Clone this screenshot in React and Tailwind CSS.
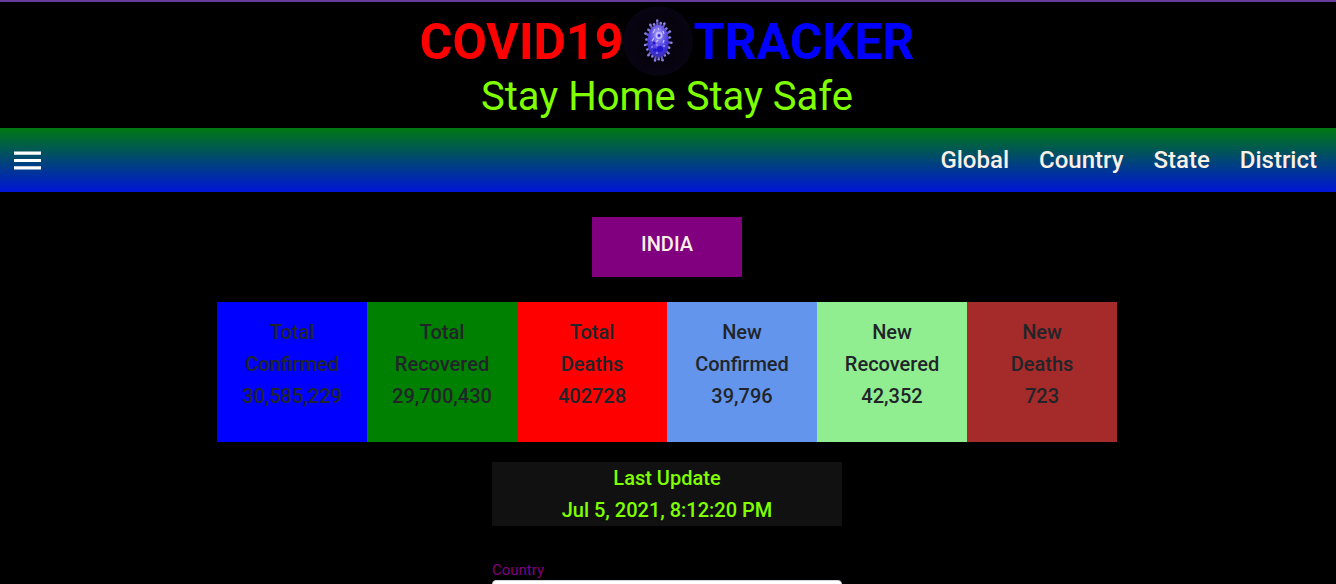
import React from "react";

const links = ["Global", "Country", "State", "District"];

const stats = [
  { kind: "Total", name: "Confirmed", value: "30,585,229", color: "bg-[#0000ff]" },
  { kind: "Total", name: "Recovered", value: "29,700,430", color: "bg-[#008000]" },
  { kind: "Total", name: "Deaths", value: "402728", color: "bg-[#ff0000]" },
  { kind: "New", name: "Confirmed", value: "39,796", color: "bg-[#6495ed]" },
  { kind: "New", name: "Recovered", value: "42,352", color: "bg-[#90ee90]" },
  { kind: "New", name: "Deaths", value: "723", color: "bg-[#a52a2a]" },
];

function VirusLogo() {
  const spikes = Array.from({ length: 22 }, (_, i) => {
    const a = ((i + 0.3) * 2 * Math.PI) / 22;
    const reach = [1, 0.9, 0.98, 0.87][i % 4];
    const c = Math.cos(a);
    const s = Math.sin(a);
    return {
      x1: 35 + 8 * c,
      y1: 35 + 13 * s,
      x2: 35 + 13.5 * reach * c,
      y2: 35 + 20.5 * reach * s,
    };
  });
  return (
    <svg viewBox="0 0 70 70" className="size-[70px] shrink-0" role="img" aria-label="Virus">
      <defs>
        <radialGradient id="virusBody" cx="0.5" cy="0.3" r="0.72">
          <stop offset="0" stopColor="#b4a8fa" />
          <stop offset="0.4" stopColor="#6a5ce6" />
          <stop offset="0.75" stopColor="#3c30d8" />
          <stop offset="1" stopColor="#3a2fae" />
        </radialGradient>
        <radialGradient id="virusDisc">
          <stop offset="0" stopColor="#03020a" />
          <stop offset="1" stopColor="#080412" />
        </radialGradient>
        <filter id="virusSoft">
          <feGaussianBlur stdDeviation="0.5" />
        </filter>
      </defs>
      <circle cx="35" cy="35" r="35" fill="url(#virusDisc)" />
      <g filter="url(#virusSoft)">
        {spikes.map((p, i) => (
          <g key={i} stroke="#6a5dcc" fill="#8d83e0">
            <line x1={p.x1} y1={p.y1} x2={p.x2} y2={p.y2} strokeWidth="2.2" />
            <circle cx={p.x2} cy={p.y2} r="1.2" stroke="none" />
          </g>
        ))}
        <path
          d="M33 19.500C37 18 42 21 44 26C46 30 46 37 45 42C44 47 40 51 36 51C30 51 26 47 25 41C24 36 24.500 30 26 26C27.500 22 30 20.500 33 19.500Z"
          fill="url(#virusBody)"
        />
        <g fill="none" stroke="#c8c0ff" strokeWidth="1.2">
          <circle cx="36" cy="29.500" r="2.800" />
          <path d="M30 27l2-4M31 32l-2 3M40 25l1 3M35 22l1 2M41 34l-1 3M33 36l2-2" />
        </g>
        <g fill="#2015d0">
          <circle cx="36" cy="29.500" r="1.200" />
          <circle cx="31" cy="37" r="1.500" />
          <circle cx="37" cy="43" r="3" />
          <circle cx="32" cy="44" r="1.800" />
        </g>
        <g fill="#8d83f4">
          <circle cx="34" cy="39" r="1.200" />
          <circle cx="29" cy="41" r="1" />
          <circle cx="41" cy="40" r="1.200" />
          <circle cx="34" cy="47" r="1.100" />
        </g>
      </g>
    </svg>
  );
}

export default function App() {
  return (
    <div className="h-screen overflow-hidden border-t-2 border-[#663d99] bg-black font-[Roboto,sans-serif] text-[#212529]">
      <header className="pt-1 pr-0.5 pb-2.5 text-center">
        <h1 className="flex h-[70px] items-start justify-center text-[50px] leading-[72px] font-bold">
          <span className="text-[#ff0000]">COVID19</span>
          <VirusLogo />
          <span className="text-[#0000ff]">TRACKER</span>
        </h1>
        <p className="text-[40px] leading-[42px] text-[#7fff00]">Stay Home Stay Safe</p>
      </header>

      <nav className="flex h-16 items-center justify-between bg-linear-to-b/srgb from-[#007a12] to-[#0014d6] pr-[19px] pl-3.5 text-2xl font-medium text-[#faf0e6]">
        <button type="button" aria-label="Menu" className="text-white">
          <svg viewBox="0 0 27 19" className="h-[19px] w-[27px]" fill="currentColor" aria-hidden="true">
            <path d="M0 .5h27v3.200H0zM0 8h27v3H0zM0 15.300h27v3.200H0z" />
          </svg>
        </button>
        <ul className="flex gap-[30px]">
          {links.map((label) => (
            <li key={label}>
              <a href={"#" + label.toLowerCase()}>{label}</a>
            </li>
          ))}
        </ul>
      </nav>

      <main className="flex flex-col items-center pt-[25px] pr-0.5 text-center text-xl leading-8 font-medium">
        <h2 className="h-[60px] w-[150px] bg-[#800080] pt-[11px] text-[#faf0e6]">INDIA</h2>

        <section className="mt-[25px] flex flex-wrap justify-center">
          {stats.map((s) => (
            <div key={s.kind + s.name} className={"h-[140px] w-[150px] pt-3.5 " + s.color}>
              <p>{s.kind}</p>
              <p>{s.name}</p>
              <p>{s.value}</p>
            </div>
          ))}
        </section>

        <section className="mt-5 w-full max-w-[350px] bg-[#111111] text-[#7fff00]">
          <p>Last Update</p>
          <p>Jul 5, 2021, 8:12:20 PM</p>
        </section>

        <div className="mt-[34px] flex w-full max-w-[350px] flex-col items-start text-[15px] leading-5 font-normal">
          <label htmlFor="country" className="text-[#800080]">Country</label>
          <select id="country" className="h-[38px] w-full appearance-none rounded border border-[#ced4da] bg-white px-3 text-base" />
        </div>
      </main>
    </div>
  );
}
